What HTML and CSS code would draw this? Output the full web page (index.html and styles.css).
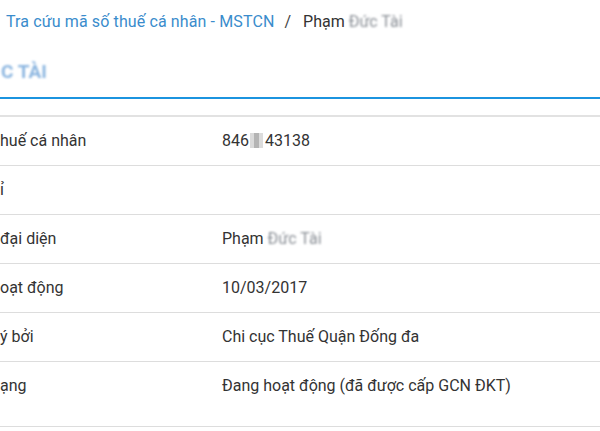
FILE: index.html
```html
<!DOCTYPE html>
<html lang="vi">
<head>
<meta charset="utf-8">
<link rel="stylesheet" href="styles.css">
</head>
<body>
<div class="page">
  <nav class="crumbs">
    <a class="crumb-link">Tra cứu mã số thuế cá nhân - MSTCN</a>
    <span class="sep">/</span>
    <span class="crumb-current">Phạm <span class="blur">Đức Tài</span></span>
  </nav>
  <h1 class="title"><span class="blur-title">C TÀI</span></h1>
  <div class="table">
    <div class="row"><div class="label">huế cá nhân</div><div class="value">846<span class="mask"></span>43138</div></div>
    <div class="row"><div class="label">ỉ</div><div class="value"></div></div>
    <div class="row"><div class="label">đại diện</div><div class="value">Phạm <span class="blur">Đức Tài</span></div></div>
    <div class="row"><div class="label">oạt động</div><div class="value">10/03/2017</div></div>
    <div class="row"><div class="label">ý bởi</div><div class="value">Chi cục Thuế Quận Đống đa</div></div>
    <div class="row last"><div class="label">ạng</div><div class="value">Đang hoạt động (đã được cấp GCN ĐKT)</div></div>
  </div>
</div>
</body>
</html>
```
FILE: styles.css
```css
html, body {
  margin: 0;
  padding: 0;
  background: #ffffff;
}
body {
  font-family: Roboto, "Noto Sans", sans-serif;
  font-size: 16px;
  color: #333333;
  overflow: hidden;
}
.page {
  width: 600px;
}
.crumbs {
  padding: 11px 0 0 6px;
  line-height: 22px;
  height: 22px;
  white-space: nowrap;
}
.crumb-link {
  color: #3a8ccc;
  letter-spacing: 0.12px;
}
.sep {
  color: #444;
  margin: 0 8px 0 6px;
}
.crumb-current {
  color: #333;
}
.blur {
  color: #8a8f96;
  filter: blur(1.2px);
}
.title {
  margin: 0;
  padding: 27px 0 0 0;
  height: 37px;
  border-bottom: 2px solid #1b94df;
  font-size: 19px;
  line-height: 24px;
  font-weight: bold;
}
.blur-title {
  display: inline-block;
  color: #8cb6e0;
  filter: blur(1.2px);
  margin-left: 1px;
}
.table {
  margin-top: 16px;
  border-top: 2px solid #e2e2e2;
}
.row {
  display: flex;
  padding: 12px 0;
  line-height: 24px;
  border-bottom: 1px solid #dddddd;
  height: 24px;
}
.row.last {
  height: 40px;
}
.label {
  width: 222px;
  flex: none;
  white-space: nowrap;
}
.value {
  flex: 1;
  white-space: nowrap;
}
.mask {
  display: inline-block;
  width: 13px;
  height: 15px;
  vertical-align: -2px;
  background: linear-gradient(90deg, #dadada 0 30%, #b4b4b4 30% 70%, #dcdcdc 70%);
  margin: 0 2px 0 1px;
}
```
